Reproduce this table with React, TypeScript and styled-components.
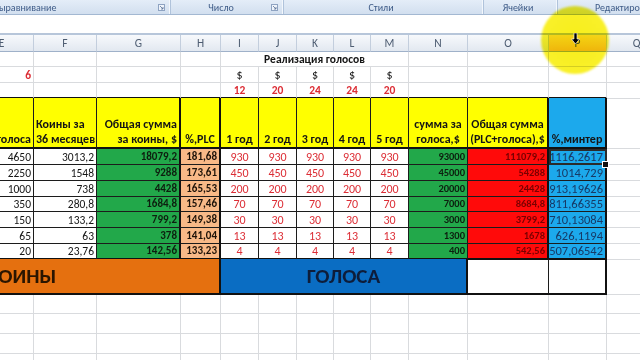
import React from 'react';
import styled, { createGlobalStyle } from 'styled-components';

const FONT = `Carlito, Lato, "Liberation Sans", sans-serif`;
const COLS = '64px 63px 84px 40px 38px 38px 37px 37px 38px 59px 81px 58px 60px';

const GlobalStyle = createGlobalStyle`
  html, body { margin: 0; padding: 0; background: #fff; }
  body { width: 640px; height: 360px; overflow: hidden; font-family: ${FONT}; }
`;

const Screen = styled.div`
  position: relative;
  width: 640px;
  height: 360px;
  overflow: hidden;
  background: #fff;
`;

const Ribbon = styled.div`
  display: flex;
  height: 14px;
  margin-left: -108px;
  background: linear-gradient(#e4edf8, #d2dfef);
  border-bottom: 1px solid #a3b8d2;
`;

const Group = styled.div<{ $w: number }>`
  flex: 0 0 ${p => p.$w}px;
  box-sizing: border-box;
  display: grid;
  grid-template-columns: 1fr auto;
  align-items: center;
  padding-right: 5px;
  border-right: 1px solid #b0c3db;
  box-shadow: inset -1px 0 0 #f3f7fc;
  font-size: 10px;
  color: #3f5c88;
`;

const GroupLabel = styled.span`
  text-align: center;
  white-space: nowrap;
`;

const Launcher = () => (
  <svg width="7" height="7" viewBox="0 0 7 7">
    <rect x="0.5" y="0.5" width="6" height="6" fill="#eef3fa" stroke="#8ea3c2" />
    <path d="M2 2 L5 5 M5 3 L5 5 L3 5" stroke="#5a7297" strokeWidth="0.8" fill="none" />
  </svg>
);

const FormulaGap = styled.div`
  height: 18px;
  background: #fff;
  border-bottom: 2px solid #b7c6da;
`;

const Sheet = styled.div`
  margin-left: -30px;
`;

const HeaderRow = styled.div`
  display: grid;
  grid-template-columns: ${COLS};
  height: 17px;
`;

const ColHead = styled.div<{ $active?: boolean }>`
  box-sizing: border-box;
  display: flex;
  align-items: center;
  justify-content: center;
  font-size: 11.5px;
  color: #4e5d72;
  background: ${p =>
    p.$active ? 'linear-gradient(#fbe39a, #f6c24a)' : 'linear-gradient(#f7f9fc, #e2e8f0)'};
  border-right: 1px solid #c3cedd;
  border-bottom: 1px solid #9fb1c9;
`;

const Row = styled.div<{ $h: number }>`
  display: grid;
  grid-template-columns: ${COLS};
  height: ${p => p.$h}px;
`;

type Edge = 'g' | 'k' | 'kk';
const edge = (e?: Edge) =>
  e === 'k' ? '1px solid #1c1c1c' : e === 'kk' ? '2px solid #111' : '1px solid #d9dbde';

type Align = 'l' | 'c' | 'r';

const Cell = styled.div<{
  $span?: number;
  $bg?: string;
  $fg?: string;
  $align?: Align;
  $bold?: boolean;
  $size?: number;
  $r?: Edge;
  $b?: Edge;
  $bottom?: boolean;
  $pad?: number;
}>`
  grid-column: span ${p => p.$span ?? 1};
  box-sizing: border-box;
  min-width: 0;
  display: flex;
  justify-content: ${p => (p.$align === 'l' ? 'flex-start' : p.$align === 'c' ? 'center' : 'flex-end')};
  align-items: ${p => (p.$bottom ? 'flex-end' : 'center')};
  text-align: ${p => (p.$align === 'l' ? 'left' : p.$align === 'c' ? 'center' : 'right')};
  padding: 0 ${p => p.$pad ?? 2}px;
  background: ${p => p.$bg ?? 'transparent'};
  color: ${p => p.$fg ?? '#151515'};
  font-weight: ${p => (p.$bold ? 700 : 400)};
  font-size: ${p => p.$size ?? 11}px;
  line-height: 14px;
  white-space: nowrap;
  border-right: ${p => edge(p.$r)};
  border-bottom: ${p => edge(p.$b)};
`;

const SelectedCell = styled(Cell)`
  position: relative;
  z-index: 2;
  outline: 2px solid #2b2b2b;
  outline-offset: -2px;
  &::after {
    content: '';
    position: absolute;
    right: -4px;
    bottom: -4px;
    width: 5px;
    height: 5px;
    background: #111;
    border: 1px solid #fff;
  }
`;

const HeadText = styled.span`
  display: block;
  line-height: 15px;
`;

const Highlight = styled.div`
  position: absolute;
  left: 541px;
  top: 6px;
  width: 68px;
  height: 68px;
  border-radius: 50%;
  background: radial-gradient(circle, #f8ef1a 0%, #f9f02a 70%, rgba(249, 240, 42, 0.75) 100%);
  mix-blend-mode: multiply;
  filter: blur(1.2px);
  pointer-events: none;
`;

const Cursor = styled.svg`
  position: absolute;
  left: 571px;
  top: 33px;
`;

const YELLOW = '#ffff00';
const GREEN = '#22a84a';
const PEACH = '#f8b987';
const RED = '#ff0a0a';
const BLUE = '#1ca9ec';
const TXT_RED = '#dc2d35';

const RIGHT: Edge[] = ['k', 'k', 'kk', 'kk', 'k', 'k', 'k', 'k', 'k', 'k', 'kk', 'kk'];

const data = [
  ['4650', '3013,2', '18079,2', '181,68', '930', '93000', '111079,2', '1116,2617'],
  ['2250', '1548', '9288', '173,61', '450', '45000', '54288', '1014,729'],
  ['1000', '738', '4428', '165,53', '200', '20000', '24428', '913,19626'],
  ['350', '280,8', '1684,8', '157,46', '70', '7000', '8684,8', '811,66355'],
  ['150', '133,2', '799,2', '149,38', '30', '3000', '3799,2', '710,13084'],
  ['65', '63', '378', '141,04', '13', '1300', '1678', '626,1194'],
  ['20', '23,76', '142,56', '133,23', '4', '400', '542,56', '507,06542'],
];
const rowH = [16, 16, 16, 15, 16, 16, 15];
const letters = ['E', 'F', 'G', 'H', 'I', 'J', 'K', 'L', 'M', 'N', 'O', 'P', 'Q'];
const years = ['12', '20', '24', '24', '20'];

export default function App() {
  return (
    <Screen>
      <GlobalStyle />
      <Ribbon>
        <Group $w={279}>
          <GroupLabel>Выравнивание</GroupLabel>
          <Launcher />
        </Group>
        <Group $w={113}>
          <GroupLabel>Число</GroupLabel>
          <Launcher />
        </Group>
        <Group $w={200}>
          <GroupLabel>Стили</GroupLabel>
          <span />
        </Group>
        <Group $w={74}>
          <GroupLabel>Ячейки</GroupLabel>
          <span />
        </Group>
        <Group $w={150}>
          <GroupLabel>Редактирование</GroupLabel>
          <span />
        </Group>
      </Ribbon>
      <FormulaGap />
      <Sheet>
        <HeaderRow>
          {letters.map(l => (
            <ColHead key={l} $active={l === 'P'}>
              {l}
            </ColHead>
          ))}
        </HeaderRow>

        <Row $h={15}>
          <Cell />
          <Cell />
          <Cell />
          <Cell />
          <Cell $span={5} $align="c" $bold $size={11.5}>
            Реализация голосов
          </Cell>
          <Cell />
          <Cell />
          <Cell />
          <Cell />
        </Row>

        <Row $h={16}>
          <Cell $fg={TXT_RED} $bold $size={11.5}>
            6
          </Cell>
          <Cell />
          <Cell />
          <Cell />
          {years.map((_, i) => (
            <Cell key={i} $align="c" $size={12}>
              $
            </Cell>
          ))}
          <Cell />
          <Cell />
          <Cell />
          <Cell />
        </Row>

        <Row $h={15}>
          {Array.from({ length: 4 }).map((_, i) => (
            <Cell key={i} $b="kk" />
          ))}
          {years.map((y, i) => (
            <Cell key={'y' + i} $align="c" $bold $size={11.5} $fg={TXT_RED} $b="kk">
              {y}
            </Cell>
          ))}
          <Cell $b="kk" />
          <Cell $b="kk" />
          <Cell $b="kk" />
          <Cell />
        </Row>

        <Row $h={51}>
          <Cell $bg={YELLOW} $bold $size={12} $bottom $r={RIGHT[0]} $b="kk">
            <HeadText>голоса</HeadText>
          </Cell>
          <Cell $bg={YELLOW} $bold $size={12} $bottom $align="l" $r={RIGHT[1]} $b="kk">
            <HeadText>
              Коины за
              <br />
              36 месяцев
            </HeadText>
          </Cell>
          <Cell $bg={YELLOW} $bold $size={12} $bottom $r={RIGHT[2]} $b="kk">
            <HeadText>
              Общая сумма
              <br />
              за коины, $
            </HeadText>
          </Cell>
          <Cell $bg={YELLOW} $bold $size={12} $bottom $align="c" $r={RIGHT[3]} $b="kk">
            <HeadText>%,PLC</HeadText>
          </Cell>
          {[1, 2, 3, 4, 5].map(n => (
            <Cell key={n} $bg={YELLOW} $bold $size={12} $bottom $align="c" $r={RIGHT[3 + n]} $b="kk">
              <HeadText>{n} год</HeadText>
            </Cell>
          ))}
          <Cell $bg={YELLOW} $bold $size={12} $bottom $align="c" $r={RIGHT[9]} $b="kk">
            <HeadText>
              сумма за
              <br />
              голоса,$
            </HeadText>
          </Cell>
          <Cell $bg={YELLOW} $bold $size={12} $bottom $align="c" $pad={0} $r={RIGHT[10]} $b="kk">
            <HeadText>
              Общая сумма
              <br />
              (PLC+голоса),$
            </HeadText>
          </Cell>
          <Cell $bg={BLUE} $bold $size={12} $bottom $align="c" $r={RIGHT[11]} $b="kk">
            <HeadText>%,минтер</HeadText>
          </Cell>
          <Cell />
        </Row>

        {data.map((r, ri) => {
          const b: Edge = ri === data.length - 1 ? 'kk' : 'k';
          return (
            <Row key={ri} $h={rowH[ri]}>
              <Cell $r={RIGHT[0]} $b={b} $size={11.5}>
                {r[0]}
              </Cell>
              <Cell $r={RIGHT[1]} $b={b} $size={11.5}>
                {r[1]}
              </Cell>
              <Cell $bg={GREEN} $fg="#0d1f0f" $bold $r={RIGHT[2]} $b={b}>
                {r[2]}
              </Cell>
              <Cell $bg={PEACH} $fg="#1d1208" $bold $r={RIGHT[3]} $b={b}>
                {r[3]}
              </Cell>
              {[0, 1, 2, 3, 4].map(k => (
                <Cell key={k} $align="c" $fg={TXT_RED} $size={12} $r={RIGHT[4 + k]} $b={b}>
                  {r[4]}
                </Cell>
              ))}
              <Cell $bg={GREEN} $fg="#0d1f0f" $bold $size={10.5} $r={RIGHT[9]} $b={b}>
                {r[5]}
              </Cell>
              <Cell $bg={RED} $fg="#7a0000" $bold $size={10.5} $r={RIGHT[10]} $b={b}>
                {r[6]}
              </Cell>
              {ri === 0 ? (
                <SelectedCell $bg={BLUE} $fg="#173a66" $size={12.5} $r={RIGHT[11]} $b={b} $pad={2}>
                  {r[7]}
                </SelectedCell>
              ) : (
                <Cell $bg={BLUE} $fg="#173a66" $size={12.5} $r={RIGHT[11]} $b={b}>
                  {r[7]}
                </Cell>
              )}
              <Cell />
            </Row>
          );
        })}

        <Row $h={36}>
          <Cell $span={4} $bg="#e5700f" $fg="#2a1500" $bold $size={21} $align="l" $pad={17} $r="kk" $b="kk">
            КОИНЫ
          </Cell>
          <Cell $span={6} $bg="#0a6dc3" $fg="#0e1d3a" $bold $size={21} $align="c" $r="kk" $b="kk">
            ГОЛОСА
          </Cell>
          <Cell $r="k" $b="kk" />
          <Cell $r="kk" $b="kk" />
          <Cell />
        </Row>

        {[0, 1, 2, 3].map(i => (
          <Row key={'e' + i} $h={i === 0 ? 19 : 20}>
            {letters.map(l => (
              <Cell key={l} />
            ))}
          </Row>
        ))}
      </Sheet>

      <Highlight />
      <Cursor width="9" height="12" viewBox="0 0 9 12">
        <path d="M3 0 H6 V6 H8.5 L4.5 11 L0.5 6 H3 Z" fill="#000" stroke="#fff" strokeWidth="0.6" />
      </Cursor>
    </Screen>
  );
}
